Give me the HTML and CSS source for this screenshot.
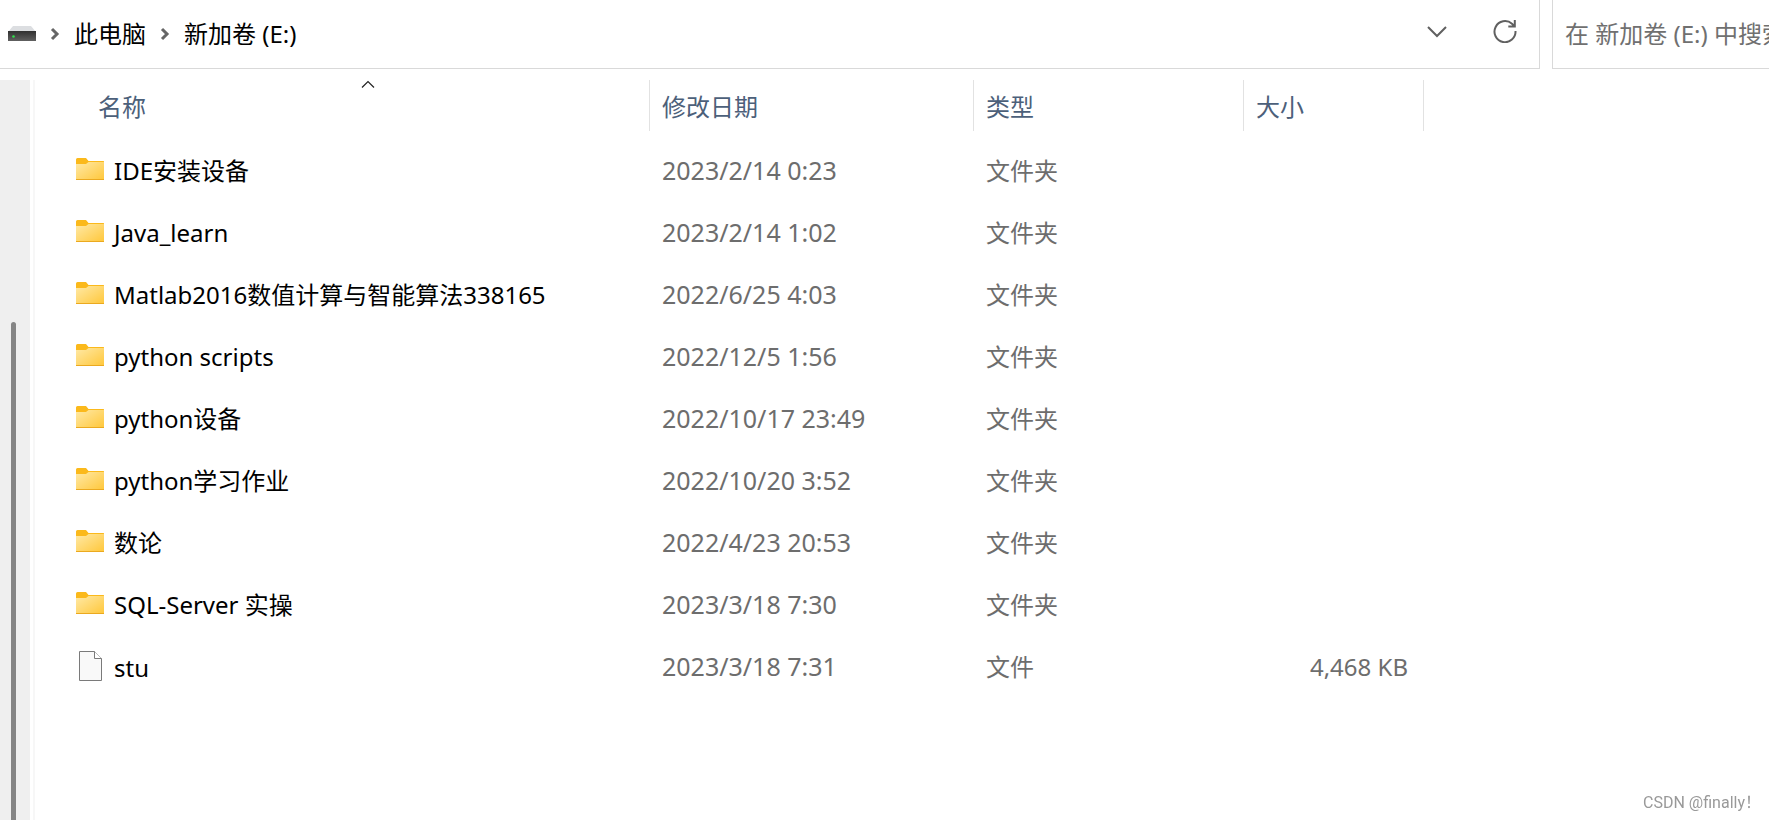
FILE: index.html
```
<!DOCTYPE html>
<html lang="zh-CN">
<head>
    <meta charset="UTF-8">
    <meta name="viewport" content="width=device-width, initial-scale=1.0">
    <title>新加卷 (E:)</title>
    <link rel="stylesheet" href="styles.css">
</head>
<body>

    <!-- Shared icons -->
    <svg class="icon-defs" aria-hidden="true">
        <defs>
            <linearGradient id="folder-front" x1="0" y1="0" x2="1" y2="1">
                <stop offset="0" stop-color="#ffe9a6"/>
                <stop offset="1" stop-color="#ffc73a"/>
            </linearGradient>
        </defs>
        <symbol id="folder" viewBox="0 0 28 22">
            <path d="M0 1.500A1.500 1.500 0 0 1 1.500 0h8.500l2.500 3H27.500a.5.5 0 0 1 .5.5V12H0z" fill="#fbb91b"/>
            <path d="M0 6h10l2.500-2H28v17a1 1 0 0 1-1 1H1a1 1 0 0 1-1-1z" fill="url(#folder-front)"/>
            <path d="M0 21.500h28" fill="none" stroke="#eba91f"/>
        </symbol>
        <symbol id="crumb-arrow" viewBox="0 0 10 14">
            <path d="M2 2l5 5-5 5" fill="none" stroke="#666" stroke-width="3"/>
        </symbol>
    </svg>

    <!-- Address and search -->
    <header class="topbar">
        <div class="address">
            <nav class="breadcrumb" aria-label="地址">
                <svg class="drive" viewBox="0 0 28 16" aria-hidden="true">
                    <defs>
                        <linearGradient id="drive-front" x1="0" y1="0" x2="0" y2="1">
                            <stop offset="0" stop-color="#303030"/>
                            <stop offset="1" stop-color="#606060"/>
                        </linearGradient>
                    </defs>
                    <path d="M5 0h18l5 6H0z" fill="#dcdee1"/>
                    <path d="M0 5h28v10H0z" fill="url(#drive-front)"/>
                    <circle cx="5.500" cy="10.500" r="1.300" fill="#2fe04a"/>
                </svg>
                <svg class="crumb-arrow" aria-hidden="true"><use href="#crumb-arrow"/></svg>
                <button class="crumb" type="button">此电脑</button>
                <svg class="crumb-arrow" aria-hidden="true"><use href="#crumb-arrow"/></svg>
                <button class="crumb" type="button">新加卷 (E:)</button>
            </nav>
            <button class="tool" type="button" aria-label="以前的位置">
                <svg width="24" height="24" viewBox="0 0 24 24"><path d="M3 8l9 9 9-9" fill="none" stroke="#606060" stroke-width="2"/></svg>
            </button>
            <button class="tool" type="button" aria-label="刷新">
                <svg width="24" height="24" viewBox="0 0 24 24"><path d="M22.500 12A10.500 10.500 0 1 1 19 4.800l2.500 2.500M21.800 1v6.500h-6.500" fill="none" stroke="#606060" stroke-width="2"/></svg>
            </button>
        </div>
        <input class="search" type="text" aria-label="搜索" placeholder="在 新加卷 (E:) 中搜索">
    </header>

    <div class="content">
        <aside class="sidebar">
            <div class="thumb"></div>
        </aside>

        <!-- File list -->
        <main class="files">
            <table class="file-table">
                <colgroup>
                    <col class="col-name">
                    <col class="col-date">
                    <col class="col-type">
                    <col class="col-size">
                    <col>
                </colgroup>
                <thead>
                    <tr>
                        <th class="name-head" aria-sort="ascending">
                            <button class="sort" type="button">名称
                                <svg class="sort-mark" viewBox="0 0 14 8" aria-hidden="true"><path d="M1 7.500l6-6 6 6" fill="none" stroke="#222" stroke-width="1.200"/></svg>
                            </button>
                        </th>
                        <th><button class="sort" type="button">修改日期</button></th>
                        <th><button class="sort" type="button">类型</button></th>
                        <th><button class="sort" type="button">大小</button></th>
                        <td></td>
                    </tr>
                </thead>
                <tbody>
                    <tr>
                        <td class="name"><svg class="icon"><use href="#folder"/></svg>IDE安装设备</td>
                        <td class="date">2023/2/14 0:23</td>
                        <td>文件夹</td>
                        <td class="size"></td>
                        <td></td>
                    </tr>
                    <tr>
                        <td class="name"><svg class="icon"><use href="#folder"/></svg>Java_learn</td>
                        <td class="date">2023/2/14 1:02</td>
                        <td>文件夹</td>
                        <td class="size"></td>
                        <td></td>
                    </tr>
                    <tr>
                        <td class="name"><svg class="icon"><use href="#folder"/></svg>Matlab2016数值计算与智能算法338165</td>
                        <td class="date">2022/6/25 4:03</td>
                        <td>文件夹</td>
                        <td class="size"></td>
                        <td></td>
                    </tr>
                    <tr>
                        <td class="name"><svg class="icon"><use href="#folder"/></svg>python scripts</td>
                        <td class="date">2022/12/5 1:56</td>
                        <td>文件夹</td>
                        <td class="size"></td>
                        <td></td>
                    </tr>
                    <tr>
                        <td class="name"><svg class="icon"><use href="#folder"/></svg>python设备</td>
                        <td class="date">2022/10/17 23:49</td>
                        <td>文件夹</td>
                        <td class="size"></td>
                        <td></td>
                    </tr>
                    <tr>
                        <td class="name"><svg class="icon"><use href="#folder"/></svg>python学习作业</td>
                        <td class="date">2022/10/20 3:52</td>
                        <td>文件夹</td>
                        <td class="size"></td>
                        <td></td>
                    </tr>
                    <tr>
                        <td class="name"><svg class="icon"><use href="#folder"/></svg>数论</td>
                        <td class="date">2022/4/23 20:53</td>
                        <td>文件夹</td>
                        <td class="size"></td>
                        <td></td>
                    </tr>
                    <tr>
                        <td class="name"><svg class="icon"><use href="#folder"/></svg>SQL-Server 实操</td>
                        <td class="date">2023/3/18 7:30</td>
                        <td>文件夹</td>
                        <td class="size"></td>
                        <td></td>
                    </tr>
                    <tr>
                        <td class="name"><svg class="icon file" viewBox="0 0 28 32"><path d="M3.500 1.500h15l7 7v22h-22z" fill="#f9f9f9" stroke="#7a7a7a"/><path d="M18.500 1.500v7h7" fill="#fff" stroke="#7a7a7a"/></svg>stu</td>
                        <td class="date">2023/3/18 7:31</td>
                        <td>文件</td>
                        <td class="size">4,468 KB</td>
                        <td></td>
                    </tr>
                </tbody>
            </table>
        </main>
    </div>

    <div class="watermark">CSDN @finally！</div>

</body>
</html>
```
FILE: styles.css
```
* {
    margin: 0;
    padding: 0;
    box-sizing: border-box;
}

body {
    display: flex;
    flex-direction: column;
    min-height: 100vh;
    font-family: "Noto Sans", "Noto Sans CJK SC", sans-serif;
    font-size: 24px;
    line-height: 32px;
    color: #000;
    background-color: #fff;
    overflow-x: hidden;
}

button {
    border: none;
    background: none;
    font: inherit;
    color: inherit;
    cursor: pointer;
}

.icon-defs {
    position: absolute;
    width: 0;
    height: 0;
}

/* Address and search */
.topbar {
    display: flex;
    gap: 12px;
    height: 69px;
}

.address {
    display: flex;
    flex: 1;
    align-items: center;
    padding-right: 20px;
    border-right: 1px solid #d9d9d9;
    border-bottom: 1px solid #d9d9d9;
}

.breadcrumb {
    display: flex;
    flex: 1;
    align-items: center;
    padding-left: 8px;
}

.drive {
    width: 28px;
    height: 16px;
}

.crumb-arrow {
    width: 10px;
    height: 14px;
    margin: 0 14px;
}

.crumb {
    white-space: nowrap;
}

.tool {
    width: 28px;
    height: 32px;
    margin-left: 40px;
}

.search {
    width: 217px;
    padding: 0 0 0 12px;
    border: 1px solid #d9d9d9;
    border-width: 0 0 1px 1px;
    outline: none;
    font: inherit;
    background-color: #fff;
}

.search::placeholder {
    color: #707070;
}

/* Navigation pane */
.content {
    display: flex;
    flex: 1;
    padding-top: 11px;
}

.sidebar {
    display: flex;
    width: 30px;
    padding: 242px 0 0 11px;
    background-color: #efefef;
}

.thumb {
    width: 5px;
    border-radius: 3px 3px 0 0;
    background-color: #858585;
}

/* File list */
.files {
    flex: 1;
    margin-left: 3px;
    border-left: 2px solid #f7f7f7;
}

.file-table {
    width: 100%;
    table-layout: fixed;
    border-collapse: collapse;
    color: #6d6d6d;
}

.col-name {
    width: 615px;
}

.col-date {
    width: 324px;
}

.col-type {
    width: 270px;
}

.col-size {
    width: 180px;
}

.file-table th {
    padding-bottom: 9px;
    font-weight: normal;
    text-align: left;
}

.file-table .name-head {
    padding-left: 51px;
}

.sort {
    display: block;
    position: relative;
    width: 100%;
    height: 51px;
    padding: 2px 0 0 12px;
    border-right: 1px solid #e2e2e2;
    text-align: left;
    color: #4c607a;
}

.sort-mark {
    position: absolute;
    top: 0;
    left: 50%;
    width: 14px;
    height: 8px;
    margin-left: -7px;
}

.file-table tbody td {
    height: 62px;
    padding-left: 12px;
    white-space: nowrap;
}

.file-table tbody .name {
    padding-left: 41px;
    color: #000;
}

.file-table .date {
    padding-bottom: 2px;
    font-size: 25px;
}

.file-table .size {
    padding-right: 16px;
    text-align: right;
}

.icon {
    width: 28px;
    height: 22px;
    margin-right: 10px;
    vertical-align: 0;
}

.icon.file {
    height: 32px;
    vertical-align: -5px;
}

/* Watermark */
.watermark {
    position: fixed;
    right: 8px;
    bottom: 6px;
    font-family: Roboto, "Noto Sans CJK SC", sans-serif;
    font-size: 16px;
    line-height: 22px;
    color: #999;
}
```
